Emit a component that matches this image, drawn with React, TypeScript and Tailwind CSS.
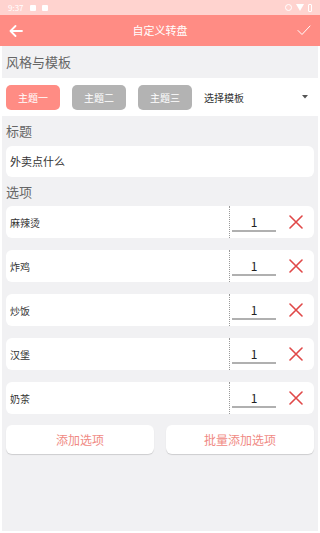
import React from "react";

const FONT = { fontFamily: '"Noto Sans CJK SC", "Noto Sans", sans-serif' };

const options = ["麻辣烫", "炸鸡", "炒饭", "汉堡", "奶茶"];

function XIcon() {
  return (
    <svg width="14" height="14" viewBox="0 0 14 14">
      <path d="M1 1 L13 13 M13 1 L1 13" stroke="#e04848" strokeWidth="1.6" strokeLinecap="round" />
    </svg>
  );
}

export default function App() {
  return (
    <div className="flex h-[533px] w-[320px] flex-col overflow-hidden bg-white" style={FONT}>
      {/* status bar */}
      <div className="flex h-[15px] items-center justify-between bg-[#ffd3cf] px-[8px] text-[8px] text-white">
        <div className="flex items-center gap-[6px]">
          <span>9:37</span>
          <span className="h-[6px] w-[6px] rounded-[1px] bg-white" />
          <span className="h-[6px] w-[6px] rounded-[1px] bg-white" />
        </div>
        <div className="flex items-center gap-[4px]">
          <span className="h-[7px] w-[7px] rounded-full border border-white" />
          <svg width="8" height="7" viewBox="0 0 8 7">
            <path d="M0 0 L8 0 L4 7 Z" fill="white" />
          </svg>
          <span className="h-[8px] w-[4px] rounded-[1px] border border-white" />
        </div>
      </div>

      {/* header */}
      <div className="flex h-[31px] items-center justify-between bg-[#ff8c84] px-[9px]">
        <svg width="14" height="12" viewBox="0 0 14 12">
          <path d="M13 6 H1.5 M6.5 1 L1.5 6 L6.5 11" stroke="white" strokeWidth="1.8" fill="none" strokeLinecap="round" strokeLinejoin="round" />
        </svg>
        <div className="text-[11px] text-white">自定义转盘</div>
        <svg width="14" height="11" viewBox="0 0 14 11">
          <path d="M1 5.5 L5 9.5 L13 1" stroke="white" strokeWidth="1" fill="none" strokeLinecap="round" strokeLinejoin="round" />
        </svg>
      </div>

      <div className="mx-[2px] mb-[2px] flex flex-1 flex-col bg-[#f1f1f3]">
        <div className="flex h-[32px] items-center px-[4px] text-[13px] text-[#666]">风格与模板</div>

        <div className="flex h-[38px] items-center bg-white pl-[4px] pr-[10px]">
          <div className="flex h-[25px] w-[54px] items-center justify-center rounded-[5px] bg-[#ff8c84] text-[10px] text-white">主题一</div>
          <div className="ml-[12px] flex h-[25px] w-[54px] items-center justify-center rounded-[5px] bg-[#b3b3b3] text-[10px] text-white">主题二</div>
          <div className="ml-[12px] flex h-[25px] w-[54px] items-center justify-center rounded-[5px] bg-[#b3b3b3] text-[10px] text-white">主题三</div>
          <div className="ml-[12px] flex-1 text-[10px] text-[#333]">选择模板</div>
          <svg width="6" height="4" viewBox="0 0 6 4">
            <path d="M0 0 L6 0 L3 3.5 Z" fill="#555" />
          </svg>
        </div>

        <div className="flex h-[30px] items-center px-[4px] text-[13px] text-[#666]">标题</div>

        <div className="mx-[4px] flex h-[31px] items-center rounded-[6px] bg-white px-[4px] text-[11px] text-[#333]">外卖点什么</div>

        <div className="flex h-[29px] items-center px-[4px] text-[13px] text-[#666]">选项</div>

        <div className="flex flex-col gap-[12px] px-[4px]">
          {options.map((o) => (
            <div key={o} className="flex h-[32px] items-stretch rounded-[6px] bg-white">
              <div className="flex flex-1 items-center pl-[4px] text-[10px] text-[#333]">{o}</div>
              <div className="border-l border-dotted border-[#999]" />
              <div className="flex w-[48px] items-center justify-center">
                <div className="mt-[2px] w-[44px] border-b-2 border-[#b0b0b0] pb-[1px] text-center text-[12px] leading-[14px] text-[#222]">1</div>
              </div>
              <div className="flex w-[36px] items-center justify-center">
                <XIcon />
              </div>
            </div>
          ))}
        </div>

        <div className="mt-[11px] flex gap-[12px] px-[4px]">
          <div className="flex h-[29px] flex-1 items-center justify-center rounded-[6px] bg-white text-[12px] text-[#f08a84] shadow-[0_1px_1px_rgba(0,0,0,0.15)]">添加选项</div>
          <div className="flex h-[29px] flex-1 items-center justify-center rounded-[6px] bg-white text-[12px] text-[#f08a84] shadow-[0_1px_1px_rgba(0,0,0,0.15)]">批量添加选项</div>
        </div>
      </div>
    </div>
  );
}
